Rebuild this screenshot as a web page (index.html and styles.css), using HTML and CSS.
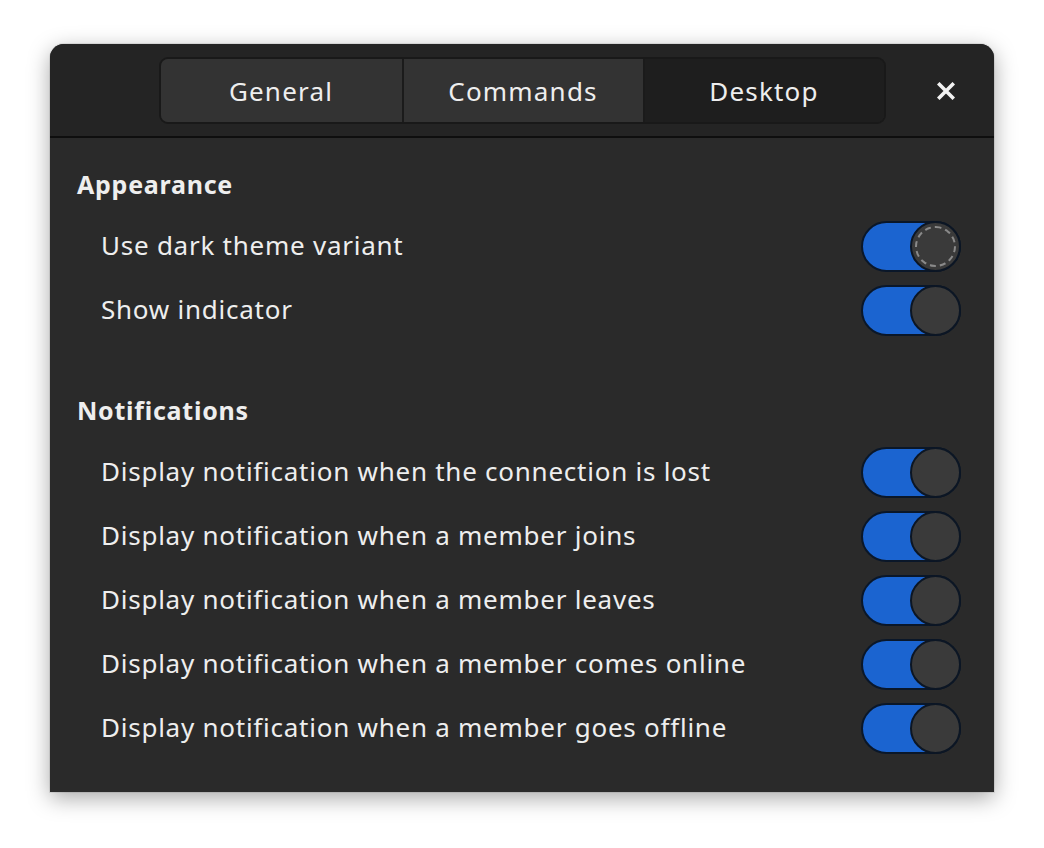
FILE: index.html
```html
<!DOCTYPE html>
<html>
<head>
<meta charset="utf-8">
<link rel="stylesheet" href="styles.css">
</head>
<body>
<div class="window">
  <header class="headerbar">
    <div class="spacer"></div>
    <div class="switcher">
      <div class="tab">General</div>
      <div class="tab">Commands</div>
      <div class="tab active">Desktop</div>
    </div>
    <div class="end">
      <div class="close">
        <svg width="18" height="18" viewBox="0 0 18 18"><path d="M2.5 2.5 L15.5 15.5 M15.5 2.5 L2.5 15.5" stroke="#f2f2f2" stroke-width="3.6" stroke-linecap="square"/></svg>
      </div>
    </div>
  </header>
  <main class="content">
    <section class="section">
      <h2 class="heading">Appearance</h2>
      <div class="row"><span class="label">Use dark theme variant</span><span class="switch"><span class="knob focus"></span></span></div>
      <div class="row"><span class="label">Show indicator</span><span class="switch"><span class="knob"></span></span></div>
    </section>
    <section class="section second">
      <h2 class="heading">Notifications</h2>
      <div class="row"><span class="label">Display notification when the connection is lost</span><span class="switch"><span class="knob"></span></span></div>
      <div class="row"><span class="label">Display notification when a member joins</span><span class="switch"><span class="knob"></span></span></div>
      <div class="row"><span class="label">Display notification when a member leaves</span><span class="switch"><span class="knob"></span></span></div>
      <div class="row"><span class="label">Display notification when a member comes online</span><span class="switch"><span class="knob"></span></span></div>
      <div class="row"><span class="label">Display notification when a member goes offline</span><span class="switch"><span class="knob"></span></span></div>
    </section>
  </main>
</div>
</body>
</html>
```
FILE: styles.css
```css
* { box-sizing: border-box; }
html, body { margin: 0; padding: 0; }
body {
  background: #ffffff;
  width: 1044px;
  height: 848px;
  overflow: hidden;
  font-family: "Noto Sans", "DejaVu Sans", sans-serif;
  color: #eeeeee;
}
.window {
  margin: 44px 0 0 50px;
  width: 944px;
  height: 748px;
  background: #2a2a2a;
  border-radius: 14px 14px 0 0;
  box-shadow: 0 6px 22px rgba(0,0,0,0.35), 0 0 0 1px rgba(0,0,0,0.08);
  overflow: hidden;
}
.headerbar {
  height: 94px;
  background: #242424;
  border-bottom: 2px solid #0e0e0e;
  display: grid;
  grid-template-columns: 1fr auto 1fr;
  align-items: center;
}
.switcher {
  display: flex;
  height: 67px;
  margin-top: 1px;
  border: 2px solid #191919;
  border-radius: 9px;
  overflow: hidden;
}
.tab {
  width: 241px;
  display: flex;
  align-items: center;
  justify-content: center;
  background: #333333;
  font-size: 26px;
  letter-spacing: 1.2px;
  color: #eeeeee;
}
.tab + .tab { border-left: 2px solid #1b1b1b; }
.tab.active { background: #1e1e1e; }
.end { display: flex; justify-content: flex-end; padding-right: 26px; }
.close {
  width: 44px; height: 44px;
  display: flex; align-items: center; justify-content: center;
  margin-top: 2px;
}
.content { padding: 29px 33px 0 27px; }
.heading {
  margin: 0 0 13px 0;
  font-size: 25px;
  font-weight: 700;
  letter-spacing: 0.75px;
  line-height: 34px;
  color: #eeeeee;
}
.section.second { margin-top: 51px; }
.row {
  height: 64px;
  display: flex;
  align-items: center;
  justify-content: space-between;
  padding-left: 24px;
}
.label { font-size: 26px; letter-spacing: 0.75px; color: #eeeeee; padding-bottom: 2px; }
.switch {
  position: relative;
  width: 100px;
  height: 51px;
  border-radius: 26px;
  background: #1b64d0;
  border: 2px solid #0a1729;
}
.knob {
  position: absolute;
  right: -2px; top: -2px;
  width: 51px; height: 51px;
  border-radius: 50%;
  background: #3a3a3a;
  border: 2px solid #0c1624;
}
.knob.focus::after {
  content: "";
  position: absolute;
  inset: 3px;
  border-radius: 50%;
  border: 2px dashed #8a8a8a;
}
```
